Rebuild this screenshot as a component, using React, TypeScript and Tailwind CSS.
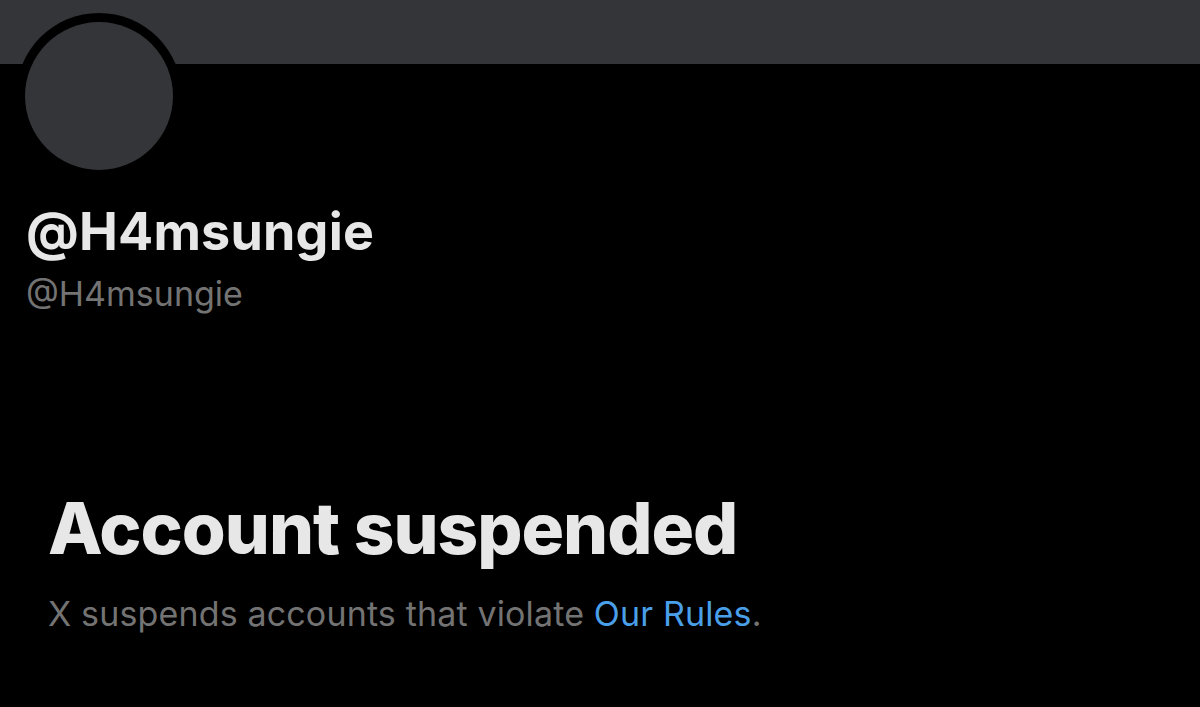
export default function App() {
  return (
    <div
      className="w-[1200px] h-[707px] bg-black overflow-hidden"
      style={{ fontFamily: "Inter, 'Noto Sans', sans-serif" }}
    >
      {/* banner */}
      <div className="h-[64px] bg-[#333538]" />

      {/* avatar, pulled up over the banner */}
      <div className="ml-[16px] -mt-[51px] w-[166px] h-[166px] rounded-full bg-black p-[9px]">
        <div className="w-full h-full rounded-full bg-[#333538]" />
      </div>

      <div className="pl-[26px] mt-[23px]">
        <h1 className="text-[52px] leading-[60px] font-bold text-[#e7e7e7] tracking-[0.2px]">
          @H4msungie
        </h1>
        <p className="text-[34px] leading-[40px] text-[#737373] mt-[12px]">@H4msungie</p>
      </div>

      <div className="pl-[48px] mt-[174px]">
        <h2 className="text-[71px] leading-[80px] font-extrabold text-[#e7e7e7] tracking-[-1px]">
          Account suspended
        </h2>
        <p className="text-[34px] leading-[40px] text-[#737373] mt-[26px] tracking-[0.15px]">
          X suspends accounts that violate <span className="text-[#4a9fe9]">Our Rules</span>.
        </p>
      </div>
    </div>
  );
}
